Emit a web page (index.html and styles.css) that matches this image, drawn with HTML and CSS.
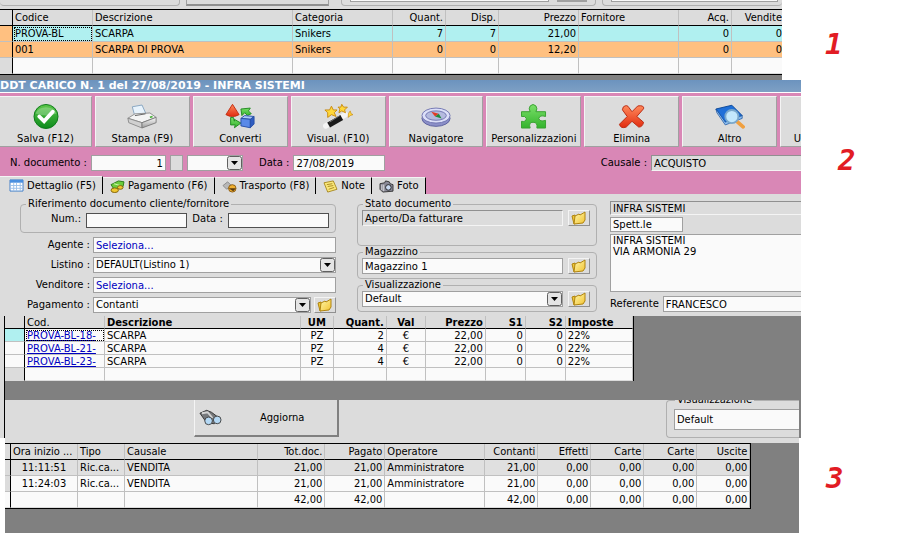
FILE: index.html
```
<!DOCTYPE html>
<html lang="it">
	<head>
		<meta charset="UTF-8">
		<title>DDT CARICO N. 1</title>
		<link rel="stylesheet" href="styles.css">
	</head>
	
	<body>
		<svg class="defs" aria-hidden="true">
			<defs>
				<linearGradient id="green" x1="0" y1="0" x2="0" y2="1"><stop offset="0" stop-color="#5cc84a"/><stop offset="1" stop-color="#0c8a1c"/></linearGradient>
				<linearGradient id="lime" x1="0" y1="0" x2="0" y2="1"><stop offset="0" stop-color="#7be06a"/><stop offset="1" stop-color="#33b32c"/></linearGradient>
				<linearGradient id="red" x1="0" y1="0" x2="0" y2="1"><stop offset="0" stop-color="#ff8a5c"/><stop offset="1" stop-color="#e22c10"/></linearGradient>
				<linearGradient id="gold" x1="0" y1="0" x2="1" y2="1"><stop offset="0" stop-color="#fff9b0"/><stop offset="1" stop-color="#f2c230"/></linearGradient>
				<linearGradient id="steel" x1="0" y1="0" x2="0" y2="1"><stop offset="0" stop-color="#fdfdfd"/><stop offset="1" stop-color="#9a9a9a"/></linearGradient>
			</defs>
			<symbol id="folder" viewBox="0 0 16 14">
				<path d="M1 5 L4 4 L5 12 L3 13 Z" fill="#f0c838" stroke="#b08410"/>
				<path d="M4 5 L8 3 L9 4 L14 1 L14 9 L12 12 L3 13 Z" fill="url(#gold)" stroke="#b08410"/>
			</symbol>
		</svg>
		
		<!-- 1: article list -->
		<section class="step step1">
			<div class="window">
				<div class="strip">
					<div class="stripgroup first"></div>
					<div class="stripbutton"></div>
					<div class="stripgroup"><span class="stripfield"></span><span class="stripmini"></span></div>
					<div class="stripgroup last"><span class="stripfield"></span></div>
				</div>
				<table class="grid articles">
					<colgroup>
						<col class="w13"><col class="w80"><col><col class="w100"><col class="w53"><col class="w53"><col class="w80"><col class="w100"><col class="w53"><col class="w50">
					</colgroup>
					<thead>
						<tr><th class="head"></th><th>Codice</th><th>Descrizione</th><th>Categoria</th><th class="num">Quant.</th><th class="num">Disp.</th><th class="num">Prezzo</th><th>Fornitore</th><th class="num">Acq.</th><th class="num edge">Vendite</th></tr>
					</thead>
					<tbody>
						<tr class="cyan"><td class="head orange"></td><td class="focus">PROVA-BL</td><td>SCARPA</td><td>Snikers</td><td class="num">7</td><td class="num">7</td><td class="num">21,00</td><td></td><td class="num">0</td><td class="num edge">0</td></tr>
						<tr class="orange"><td class="head orange"></td><td>001</td><td>SCARPA DI PROVA</td><td>Snikers</td><td class="num">0</td><td class="num">0</td><td class="num">12,20</td><td></td><td class="num">0</td><td class="num edge">0</td></tr>
						<tr><td class="head"></td><td></td><td></td><td></td><td></td><td></td><td></td><td></td><td></td><td class="edge"></td></tr>
					</tbody>
				</table>
			</div>
			<div class="note">1</div>
		</section>
		
		<!-- 2: loading document -->
		<section class="step step2">
			<div class="window">
				<h1 class="titlebar">DDT CARICO N. 1 del 27/08/2019 - INFRA SISTEMI</h1>
				<div class="toolbar">
					<button type="button" class="tool start">
						<svg viewBox="0 0 30 26"><circle cx="15" cy="13" r="12.5" fill="url(#green)" stroke="#0d7a18"/><path d="M4 10 A12 11 0 0 1 26 10 Q15 14 4 10Z" fill="#fff" opacity=".25"/><path d="M8 13 L13 18 L22 8" fill="none" stroke="#fff" stroke-width="4" stroke-linecap="round"/></svg>
						Salva (F12)
					</button>
					<button type="button" class="tool">
						<svg viewBox="0 0 34 26"><path d="M6 2 L17 0 L22 11 L9 13Z" fill="#e8f3fc" stroke="#7f9fbd"/><path d="M1 15 L9 10 L26 9 L33 14 L17 20Z" fill="#f4f4f4" stroke="#888"/><path d="M9 12 L21 10" stroke="#555"/><path d="M1 15 L17 20 L17 26 L2 20Z" fill="#d0d0d0" stroke="#888"/><path d="M17 20 L33 14 L33 20 L17 26Z" fill="url(#steel)" stroke="#777"/><path d="M26 14 l3 -1" stroke="#4db33d" stroke-width="2"/></svg>
						Stampa (F9)
					</button>
					<button type="button" class="tool">
						<svg viewBox="0 0 32 26"><path d="M8 0 L15 11 Q8 15 1 11Z" fill="url(#red)" stroke="#c02c10"/><path d="M6 14 L6 22 L11 22 L10 25 L17 20 L10 16 L10 18 L9 14Z" fill="url(#lime)" stroke="#1f8a20"/><path d="M17 5 L27 4 L25 7 L28 10 L24 12 L21 9 L18 12Z" fill="url(#lime)" stroke="#1f8a20"/><path d="M17 15 L21 12 L31 13 L27 16Z" fill="#a8c8f8" stroke="#2850a8"/><path d="M17 15 L27 16 L27 25 L17 23Z" fill="#5a8ae8" stroke="#2850a8"/><path d="M27 16 L31 13 L31 21 L27 25Z" fill="#2f5cc0" stroke="#2850a8"/></svg>
						Converti
					</button>
					<button type="button" class="tool">
						<svg viewBox="0 0 32 26"><path d="M3 23 L24 11" stroke="#f4f4f4" stroke-width="6" stroke-linecap="round"/><path d="M6 22 L20 14" stroke="#1a1a1a" stroke-width="6"/><path d="M7 19 L18 12" stroke="#777"/><path d="M9 2 L11 6 L15 6 L12 9 L14 13 L9 11 L5 14 L5 9 L2 6 L7 6Z" fill="#ffd83a" stroke="#c88a10"/><path d="M20 0 L22 3 L26 3 L23 6 L24 9 L20 7 L17 9 L18 5 L16 3 L19 3Z" fill="#ffd83a" stroke="#c88a10"/><path d="M29 7 L30 10 L32 11 L29 12 L27 14 L27 10Z" fill="#ffd83a" stroke="#c88a10" stroke-width=".7"/></svg>
						Visual. (F10)
					</button>
					<button type="button" class="tool">
						<svg viewBox="0 0 32 26"><ellipse cx="16" cy="15" rx="15" ry="8.500" fill="#8b8fc8" stroke="#5a5e9c"/><ellipse cx="16" cy="12" rx="15" ry="8" fill="#dcdff8" stroke="#7074b0"/><ellipse cx="16" cy="12" rx="11" ry="5" fill="#b4bade" stroke="#7074b0"/><path d="M11 8 L19 10 L15 13Z" fill="#e23a24"/><path d="M22 15 L19 10 L15 13Z" fill="#1f8a3a"/></svg>
						Navigatore
					</button>
					<button type="button" class="tool">
						<svg viewBox="0 0 28 26"><path d="M1 8 H10 Q8 5 10 2 Q13 -1 16 2 Q18 5 16 8 H26 V13 Q20 11 19 15 Q20 19 26 17 V25 H17 Q18 19 13 19 Q8 19 10 25 H1 V18 Q6 19 6 15 Q5 12 1 13Z" fill="url(#lime)" stroke="#38a030"/></svg>
						Personalizzazioni
					</button>
					<button type="button" class="tool">
						<svg viewBox="0 0 28 26"><path d="M5 3 Q9 0 11 4 L14 8 L20 2 Q27 1 26 5 L19 13 L26 19 Q25 24 21 24 L14 18 L8 24 Q2 26 1 21 L9 13 L4 6Z" fill="url(#red)" stroke="#b82810"/></svg>
						Elimina
					</button>
					<button type="button" class="tool">
						<svg viewBox="0 0 32 26"><path d="M1 5 L18 1 L29 12 L11 20Z" fill="#1f6fd8" stroke="#0d4796"/><path d="M1 5 L2 9 L11 22 L29 15 L29 12 L11 19Z" fill="#8fc0f0" stroke="#0d4796" stroke-width=".7"/><path d="M23 18 L30 24" stroke="#f0a040" stroke-width="4" stroke-linecap="round"/><circle cx="18" cy="13" r="7" fill="#c4e8fc" stroke="#7aa8cc" stroke-width="2"/></svg>
						Altro
					</button>
					<button type="button" class="tool cut">U</button>
				</div>
				<div class="docrow">
					<label for="docnum">N. documento :</label>
					<input id="docnum" class="docnum" value="1">
					<button type="button" class="blank" aria-label="Numero"></button>
					<select class="series" aria-label="Serie"><option></option></select>
					<label class="datelabel" for="docdate">Data :</label>
					<input id="docdate" class="docdate" value="27/08/2019">
					<label class="push" for="reason">Causale :</label>
					<input id="reason" class="reason gray" value="ACQUISTO">
				</div>
				<div class="tabs" role="tablist">
					<button type="button" role="tab" class="tab active"><svg viewBox="0 0 16 14"><path d="M1 1h14v12H1z" fill="#fff" stroke="#3a7ac8"/><path d="M1 1h14v3H1z" fill="#4a90e0"/><path d="M1 7h14M1 10h14M5 4v9M8 4v9M12 4v9" stroke="#9cc0e8"/></svg>Dettaglio (F5)</button>
					<button type="button" role="tab" class="tab"><svg viewBox="0 0 16 14"><path d="M1 5 L9 1 L15 2 L14 7 L5 11Z" fill="#6ccc3c" stroke="#2a7a18"/><path d="M4 4 L11 6" stroke="#d8f8b0"/><ellipse cx="5" cy="11" rx="4" ry="2.500" fill="#f0c830" stroke="#80600c"/><ellipse cx="11" cy="8" rx="3" ry="2" fill="#f0c830" stroke="#80600c"/></svg>Pagamento (F6)</button>
					<button type="button" role="tab" class="tab"><svg viewBox="0 0 16 14"><path d="M1 6 L6 2 L10 6 L5 10Z" fill="#b8b8b8" stroke="#888"/><circle cx="11" cy="9" r="4" fill="#f0b030" stroke="#8a5a10"/><path d="M7 9 L15 9 L12 12Z" fill="#5a3a10"/></svg>Trasporto (F8)</button>
					<button type="button" role="tab" class="tab"><svg viewBox="0 0 16 14"><path d="M1 3 L11 1 L15 10 L5 13Z" fill="#fbe87a" stroke="#a88820"/><path d="M4 5l6-1M5 7l6-1M6 10l6-2" stroke="#a88820"/></svg>Note</button>
					<button type="button" role="tab" class="tab"><svg viewBox="0 0 16 14"><path d="M1 4 L6 3 L7 1 L11 2 L12 4 L15 5 V12 L4 13 L1 10Z" fill="#8a8a98" stroke="#333"/><circle cx="10" cy="8" r="3" fill="#c8d8f0" stroke="#222"/><path d="M3 5v6M5 5v7" stroke="#ddd"/></svg>Foto</button>
				</div>
				<div class="form">
					<div class="left">
						<fieldset class="reference">
							<legend>Riferimento documento cliente/fornitore</legend>
							<label for="refnum">Num.:</label>
							<input id="refnum" class="dark">
							<label for="refdate">Data :</label>
							<input id="refdate" class="dark">
						</fieldset>
						<div class="field"><label for="agent">Agente :</label><input id="agent" class="link" value="Seleziona..."></div>
						<div class="field"><label for="list">Listino :</label><select id="list"><option>DEFAULT(Listino 1)</option></select></div>
						<div class="field"><label for="seller">Venditore :</label><input id="seller" class="link" value="Seleziona..."></div>
						<div class="field withbutton"><label for="payment">Pagamento :</label><select id="payment"><option>Contanti</option></select><button type="button" class="open" aria-label="Apri pagamento"><svg><use href="#folder"/></svg></button></div>
					</div>
					<div class="middle">
						<fieldset class="state">
							<legend>Stato documento</legend>
							<input class="gray" aria-label="Stato documento" value="Aperto/Da fatturare">
							<button type="button" class="open" aria-label="Apri stato"><svg><use href="#folder"/></svg></button>
						</fieldset>
						<fieldset>
							<legend>Magazzino</legend>
							<input aria-label="Magazzino" value="Magazzino 1">
							<button type="button" class="open" aria-label="Apri magazzino"><svg><use href="#folder"/></svg></button>
						</fieldset>
						<fieldset>
							<legend>Visualizzazione</legend>
							<select aria-label="Visualizzazione"><option>Default</option></select>
							<button type="button" class="open" aria-label="Apri visualizzazione"><svg><use href="#folder"/></svg></button>
						</fieldset>
					</div>
					<div class="right">
						<input class="gray customer" aria-label="Cliente" value="INFRA SISTEMI">
						<input class="prefix" aria-label="Titolo" value="Spett.le">
						<textarea class="address" aria-label="Indirizzo">INFRA SISTEMI
VIA ARMONIA 29</textarea>
						<div class="contact"><label for="contact">Referente</label><input id="contact" value="FRANCESCO"></div>
					</div>
				</div>
				<div class="lower">
					<table class="grid lines">
						<colgroup>
							<col class="w20"><col class="w80"><col><col class="w33"><col class="w53"><col class="w39"><col class="w60"><col class="w40"><col class="w40"><col class="w67">
						</colgroup>
						<thead>
							<tr><th class="head"></th><th class="plain">Cod.</th><th>Descrizione</th><th class="mid">UM</th><th class="num">Quant.</th><th class="mid">Val</th><th class="num">Prezzo</th><th class="num">S1</th><th class="num">S2</th><th>Imposte</th></tr>
						</thead>
						<tbody>
							<tr><td class="head cyan"></td><td class="focus"><a href="#">PROVA-BL-18-</a></td><td>SCARPA</td><td class="mid">PZ</td><td class="num">2</td><td class="mid">€</td><td class="num">22,00</td><td class="num">0</td><td class="num">0</td><td>22%</td></tr>
							<tr><td class="head white"></td><td><a href="#">PROVA-BL-21-</a></td><td>SCARPA</td><td class="mid">PZ</td><td class="num">4</td><td class="mid">€</td><td class="num">22,00</td><td class="num">0</td><td class="num">0</td><td>22%</td></tr>
							<tr><td class="head white"></td><td><a href="#">PROVA-BL-23-</a></td><td>SCARPA</td><td class="mid">PZ</td><td class="num">4</td><td class="mid">€</td><td class="num">22,00</td><td class="num">0</td><td class="num">0</td><td>22%</td></tr>
							<tr><td class="head"></td><td></td><td></td><td></td><td></td><td></td><td></td><td></td><td></td><td></td></tr>
						</tbody>
					</table>
					<div class="search">
						<button type="button" class="refresh">
							<svg viewBox="0 0 24 18"><path d="M1 4 L8 1 L13 3 L21 9 L16 15 L8 14Z" fill="#77797c" stroke="#333"/><path d="M3 4 L9 3 L14 9" fill="none" stroke="#d4d4d4" stroke-width="2"/><circle cx="10" cy="12" r="4" fill="#b4d8f4" stroke="#444"/><circle cx="19" cy="11" r="4" fill="#b4d8f4" stroke="#444"/></svg>
							<span>Aggiorna</span>
						</button>
						<fieldset class="view">
							<legend>Visualizzazione</legend>
							<input aria-label="Visualizzazione vendite" value="Default">
						</fieldset>
					</div>
				</div>
			</div>
			<div class="note">2</div>
		</section>
		
		<!-- 3: sales of the day -->
		<section class="step step3">
			<div class="window">
				<table class="grid sales">
					<colgroup>
						<col class="w6"><col class="w67"><col class="w47"><col><col class="w67"><col class="w60"><col class="w100"><col class="w53"><col class="w53"><col class="w53"><col class="w53"><col class="w53">
					</colgroup>
					<thead>
						<tr><th class="head"></th><th>Ora inizio ...</th><th>Tipo</th><th>Causale</th><th class="num">Tot.doc.</th><th class="num">Pagato</th><th>Operatore</th><th class="num">Contanti</th><th class="num">Effetti</th><th class="num">Carte</th><th class="num">Carte</th><th class="num">Uscite</th></tr>
					</thead>
					<tbody>
						<tr class="selected"><td class="head"></td><td class="mid">11:11:51</td><td>Ric.ca...</td><td>VENDITA</td><td class="num">21,00</td><td class="num">21,00</td><td>Amministratore</td><td class="num">21,00</td><td class="num">0,00</td><td class="num">0,00</td><td class="num">0,00</td><td class="num">0,00</td></tr>
						<tr><td class="head"></td><td class="mid">11:24:03</td><td>Ric.ca...</td><td>VENDITA</td><td class="num">21,00</td><td class="num">21,00</td><td>Amministratore</td><td class="num">21,00</td><td class="num">0,00</td><td class="num">0,00</td><td class="num">0,00</td><td class="num">0,00</td></tr>
						<tr><td class="head white"></td><td></td><td></td><td></td><td class="num">42,00</td><td class="num">42,00</td><td></td><td class="num">42,00</td><td class="num">0,00</td><td class="num">0,00</td><td class="num">0,00</td><td class="num">0,00</td></tr>
					</tbody>
				</table>
			</div>
			<div class="note">3</div>
		</section>
	</body>
</html>
```
FILE: styles.css
```
* {
	box-sizing: border-box;
}
html, body, h1, fieldset, legend {
	margin: 0;
	padding: 0;
}
body {
	background: #FFFFFF;
	color: #000000;
	font-family: "DejaVu Sans Condensed", "DejaVu Sans", sans-serif;
	font-size: 11px;
	line-height: 13px;
}
input, select, textarea, button {
	margin: 0;
	padding: 0 2px;
	border: 1px solid #A0A0A0;
	border-radius: 0;
	background: #FAFAFA;
	color: #000000;
	font: inherit;
	min-width: 0;
}
.defs {
	display: block;
	width: 0;
	height: 0;
}

/* Windows with their red step numbers */
.step {
	display: grid;
}
.step1 {
	grid-template-columns: minmax(0, 1fr) 121px;
}
.step2 {
	grid-template-columns: minmax(0, 1fr) 102px;
}
.step3 {
	grid-template-columns: minmax(0, 1fr) 104px;
}
.window {
	overflow: hidden;
	background: #808080;
}
.note {
	color: #E21C24;
	font: italic bold 29px/30px "DejaVu Sans Mono", monospace;
}
.step1 .note {
	padding: 29px 0 0 43px;
}
.step2 .note {
	padding: 65px 0 0 37px;
}
.step3 .note {
	padding: 25px 0 0 27px;
}

/* Data grids */
.grid {
	width: 100%;
	table-layout: fixed;
	border-collapse: separate;
	border-spacing: 0;
	border-top: 1px solid #000000;
	border-bottom: 1px solid #000000;
	background: #FAFAFA;
}
.grid th, .grid td {
	height: 16px;
	padding: 0 2px;
	border-right: 1px solid #C0C0C0;
	border-bottom: 1px solid #C0C0C0;
	overflow: hidden;
	white-space: nowrap;
	text-align: left;
	font-weight: normal;
}
.grid th {
	border-bottom-color: #000000;
	background: #DCDCDC;
}
.grid tr:last-child td {
	border-bottom-color: #DCDCDC;
}
.grid thead tr:last-child th {
	border-bottom-color: #000000;
}
.grid .head {
	border-right-color: #000000;
	background: #DCDCDC;
}
.grid .num {
	text-align: right;
}
.grid .mid {
	text-align: center;
}
.grid .edge {
	padding-right: 0;
	border-right: none;
}
.grid .focus {
	outline: 1px dotted #000000;
	outline-offset: -2px;
}
.grid .cyan, .grid .head.cyan {
	background: #B0F0F0;
}
.grid .orange, .grid .head.orange {
	background: #FFC080;
}
.grid .head.white {
	background: #FAFAFA;
}
.grid .selected {
	background: #E0E0E0;
}
.w6 { width: 6px; }
.w13 { width: 13px; }
.w20 { width: 20px; }
.w33 { width: 33px; }
.w39 { width: 39px; }
.w40 { width: 40px; }
.w47 { width: 47px; }
.w50 { width: 50px; }
.w53 { width: 53px; }
.w60 { width: 60px; }
.w67 { width: 67px; }
.w80 { width: 80px; }
.w100 { width: 100px; }

/* Bottom edge of the search area above the articles */
.strip {
	display: flex;
	align-items: flex-start;
	gap: 6px;
	height: 9px;
	background: #DCDCDC;
}
.stripgroup {
	display: flex;
	flex: 254;
	gap: 8px;
	height: 6px;
	padding: 0 8px;
	border: 1px solid #B0B0B0;
	border-top: none;
	border-radius: 0 0 4px 4px;
}
.stripgroup.first {
	flex: 175;
	border-left: none;
}
.stripgroup.last {
	flex: 179;
	padding-right: 4px;
	border-right: none;
}
.stripbutton {
	flex: 150;
	height: 6px;
	margin-right: 6px;
	border: 1px solid #A0A0A0;
	border-top: none;
	border-bottom: 2px solid #909090;
}
.stripfield {
	flex: 1;
	height: 2px;
	border: 1px solid #A0A0A0;
	border-top: none;
	background: #FAFAFA;
}
.stripmini {
	width: 30px;
	height: 2px;
	background: #A0A0A0;
}
.step1 .window {
	padding-bottom: 5px;
}

/* Document window */
.step2 .window {
	font-family: "DejaVu Sans", sans-serif;
	font-size: 10px;
	line-height: 12px;
}
.titlebar {
	height: 13px;
	border-bottom: 1px solid #FFFFFF;
	background: linear-gradient(#6C93BE, #7EA0C4);
	color: #FFFFFF;
	font-size: 11px;
	line-height: 12px;
	white-space: nowrap;
}
.toolbar {
	display: flex;
	gap: 3px;
	padding-top: 3px;
	background: #D987B6;
}
.tool {
	display: flex;
	flex: 1;
	flex-direction: column;
	align-items: center;
	justify-content: flex-end;
	gap: 4px;
	height: 51px;
	padding: 0 0 1px;
	border-color: #F4F4F4 #A0A0A0 #A0A0A0 #F4F4F4;
	background: #DCDCDC;
	white-space: nowrap;
}
.tool.start {
	flex: 0 0 92px;
	border-left: none;
}
.tool.cut {
	flex: 0 0 21px;
	align-items: flex-end;
	overflow: hidden;
	border-right: none;
}
.tool svg {
	width: 30px;
	height: 25px;
}
.docrow {
	display: flex;
	align-items: center;
	gap: 4px;
	padding: 8px 0 5px 10px;
	background: #D987B6;
	white-space: nowrap;
}
.docrow input, .docrow select, .docrow button {
	height: 16px;
}
.docrow .docnum {
	width: 75px;
	text-align: right;
}
.docrow .blank {
	width: 13px;
	background: #DCDCDC;
}
.docrow .series {
	width: 56px;
}
.docrow .datelabel {
	margin-left: 12px;
}
.docrow .docdate {
	width: 92px;
}
.docrow .push {
	margin-left: auto;
}
.docrow .reason {
	width: 150px;
	border-right: none;
}
select {
	appearance: none;
	background: #FAFAFA url("data:image/svg+xml,%3Csvg xmlns='http://www.w3.org/2000/svg' width='15' height='14'%3E%3Crect x='.5' y='.5' width='14' height='13' rx='2' fill='%23e4e4e4' stroke='%23606060'/%3E%3Cpath d='M4 5h7l-3.500 4z'/%3E%3C/svg%3E") right 0 center no-repeat;
}
.gray {
	border-color: #909090 #F4F4F4 #F4F4F4 #909090;
	background: #DCDCDC;
}
.tabs {
	display: flex;
	align-items: flex-end;
	background: #D987B6;
}
.tab {
	display: flex;
	align-items: center;
	gap: 3px;
	height: 17px;
	padding: 0 6px 0 7px;
	border: none;
	border-top: 1px solid #F4F4F4;
	border-right: 1px solid #000000;
	background: #DCDCDC;
	white-space: nowrap;
}
.tab.active {
	height: 18px;
	padding: 0 6px 0 9px;
}
.tab svg {
	width: 15px;
	height: 13px;
}
.form {
	display: grid;
	grid-template-columns: minmax(0, 324fr) minmax(0, 240fr) minmax(0, 191fr);
	gap: 13px;
	padding: 4px 0 3px 20px;
	background: #DCDCDC;
}
fieldset {
	display: flex;
	align-items: flex-start;
	gap: 5px;
	min-width: 0;
	padding: 0 6px 4px 4px;
	border: 1px solid #B0B0B0;
	border-radius: 4px;
}
legend {
	height: 12px;
	margin-left: 1px;
	padding: 0 2px;
	white-space: nowrap;
}
fieldset input, fieldset select {
	flex: 1;
	height: 16px;
}
.left {
	display: flex;
	flex-direction: column;
	gap: 4px;
	padding-right: 8px;
}
.reference {
	padding: 3px 6px 4px 30px;
}
.reference legend {
	margin-left: -25px;
}
.reference input {
	height: 15px;
}
.dark {
	border-color: #505050;
}
.field {
	display: grid;
	grid-template-columns: 70px minmax(0, 1fr);
	align-items: center;
	gap: 3px;
	height: 16px;
}
.field.withbutton {
	grid-template-columns: 70px minmax(0, 1fr) 22px;
}
.field label {
	text-align: right;
	white-space: nowrap;
}
.field input, .field select {
	height: 16px;
}
.link {
	color: #0000C0;
}
.open {
	display: flex;
	align-items: center;
	justify-content: center;
	width: 22px;
	height: 16px;
	padding: 0;
	border-color: #F4F4F4 #909090 #909090 #F4F4F4;
	background: #DCDCDC;
}
.open svg {
	width: 16px;
	height: 14px;
}
.state {
	min-height: 48px;
}
.right {
	display: flex;
	flex-direction: column;
	gap: 2px;
	padding-top: 3px;
}
.right input, .right textarea {
	border-right: none;
}
.right .customer {
	height: 14px;
}
.right .prefix {
	width: 73px;
	height: 15px;
	border-right: 1px solid #A0A0A0;
}
.address {
	display: block;
	height: 58px;
	line-height: 11px;
	resize: none;
	overflow: hidden;
}
.contact {
	display: flex;
	align-items: center;
	gap: 4px;
	padding-top: 2px;
}
.contact input {
	flex: 1;
	height: 16px;
}
.lower {
	margin-left: 4px;
	border-left: 1px solid #000000;
	box-shadow: -4px 0 0 #DCDCDC;
}
.lines {
	width: 79%;
	border-top: none;
	border-bottom: none;
	border-right: 1px solid #000000;
}
.lines th, .lines td {
	height: 13px;
	line-height: 11px;
}
.lines th {
	font-weight: bold;
}
.lines th.plain {
	font-weight: normal;
}
.lines a {
	color: #0000C0;
}
.search {
	display: flex;
	justify-content: space-between;
	height: 38px;
	margin: 19px 2px 0 0;
	padding-left: 189px;
	overflow: hidden;
	background: #DCDCDC;
	font-family: "DejaVu Sans Condensed", "DejaVu Sans", sans-serif;
	font-size: 11px;
}
.refresh {
	display: flex;
	align-items: center;
	gap: 38px;
	width: 145px;
	height: 37px;
	padding: 0 4px;
	border-color: #F4F4F4 #808080 #808080 #F4F4F4;
	border-width: 0 2px 2px 1px;
	background: #DCDCDC;
}
.refresh svg {
	width: 23px;
	height: 18px;
}
.view {
	width: 133px;
	height: 44px;
	margin-top: -6px;
	padding: 3px 0 8px 7px;
	border-right: none;
	border-radius: 4px 0 0 4px;
}
.view input {
	height: 21px;
	border-right: none;
}

/* Sales window */
.step3 .window {
	margin-left: 5px;
	padding-bottom: 24px;
	border-top: 5px solid #DCDCDC;
}
.sales {
	width: 94%;
	border-right: 1px solid #000000;
}
```
